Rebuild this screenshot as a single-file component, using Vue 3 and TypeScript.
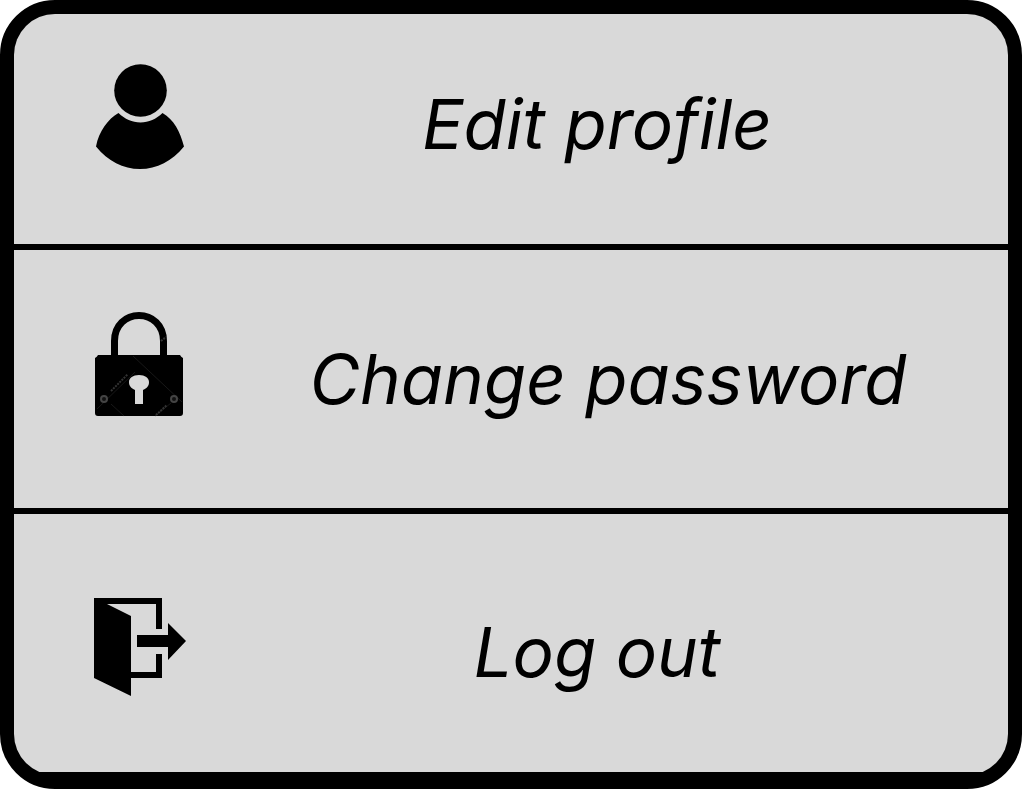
<script setup lang="ts">
type ItemId = 'profile' | 'password' | 'logout'

interface MenuItem {
  id: ItemId
  label: string
}

const items: MenuItem[] = [
  { id: 'profile', label: 'Edit profile' },
  { id: 'password', label: 'Change password' },
  { id: 'logout', label: 'Log out' },
]
</script>

<template>
  <nav class="menu" aria-label="Account">
    <button v-for="item in items" :key="item.id" type="button" class="row" :class="item.id">
      <svg v-if="item.id === 'profile'" class="icon" viewBox="0 0 92 106" aria-hidden="true">
        <circle cx="46.5" cy="26.5" r="26.3" />
        <path d="M24.5 49C14 55 5 67 2 82.5C14 97 29 105 46 105S78 97 90 82.5C86 67 80 56 68.5 49C62 55 55 58.5 46.5 58.5S31 55 24.5 49Z" />
      </svg>
      <svg v-else-if="item.id === 'password'" class="icon" viewBox="0 0 92 106" aria-hidden="true">
        <path class="shackle" d="M20.5 47V30C20.5 14 32 4.5 45 4.5S69.5 14 69.5 30V47" />
        <path d="M4 44H86Q87 46 89 47V102Q89 105 86 105H4Q1 105 1 102V47Q3 46 4 44Z" />
        <path class="scratch" d="M39 45L88 91M3 98L41 61M17 93L30 105M61 105L77 92" />
        <path class="mark" d="M17 80L34 63M62 104L73 94M67 30L72 26" />
        <circle class="screw" cx="10" cy="88" r="3" />
        <circle class="screw" cx="80" cy="88" r="3" />
        <path class="keyhole" d="M41 93V79C37 77 35 75 35 71C35 67 39 64 45 64S55 67 55 71C55 75 53 77 49 79V93Z" />
      </svg>
      <svg v-else class="icon" viewBox="0 0 92 106" aria-hidden="true">
        <path d="M0 4H68V35H62V10H13L37 22V78H62V60H68V84H37V102L0 84Z" />
        <path d="M43 41H74V29L92 47L74 66V53H43Z" />
      </svg>
      <span class="label">{{ item.label }}</span>
    </button>
  </nav>
</template>

<style>
body {
  margin: 0;
  background: #fff;
}
</style>

<style scoped>
.menu {
  box-sizing: border-box;
  min-height: 100vh;
  display: grid;
  grid-template-rows: 236fr 264fr 258fr;
  padding-bottom: 3px;
  border: 14px solid #000;
  border-radius: 55px;
  background: #000;
  overflow: hidden;
}

.row {
  display: grid;
  grid-template-columns: 92px 1fr;
  align-items: center;
  margin: 0;
  padding: 0 0 0 80px;
  border: 0;
  border-bottom: 6px solid #000;
  background: #d9d9d9;
  color: #000;
  font-family: Inter, "Liberation Sans", sans-serif;
  font-size: 69px;
  font-style: italic;
  font-weight: 400;
  line-height: 80px;
  font-feature-settings: "cv11";
  cursor: pointer;
}

.row:focus-visible {
  outline: 4px solid #555;
  outline-offset: -10px;
}

.icon {
  display: block;
  width: 92px;
  height: 106px;
}

.label {
  text-align: center;
}

.profile {
  padding-bottom: 10px;
}

.profile .icon {
  margin-bottom: 14px;
}

.password .icon {
  margin-bottom: 30px;
}

.password .label {
  padding-left: 22px;
}

.logout {
  padding-top: 18px;
  border-bottom: 0;
}

.logout .icon {
  margin-bottom: 10px;
}

.shackle {
  fill: none;
  stroke: #000;
  stroke-width: 7px;
}

.scratch,
.mark,
.screw {
  fill: none;
  stroke: #181818;
  stroke-width: 1px;
}

.mark {
  stroke: #333;
  stroke-width: 2px;
  stroke-dasharray: 2 1;
}

.screw {
  fill: #111;
  stroke: #444;
  stroke-width: 2px;
}

.keyhole {
  fill: #d9d9d9;
}
</style>
